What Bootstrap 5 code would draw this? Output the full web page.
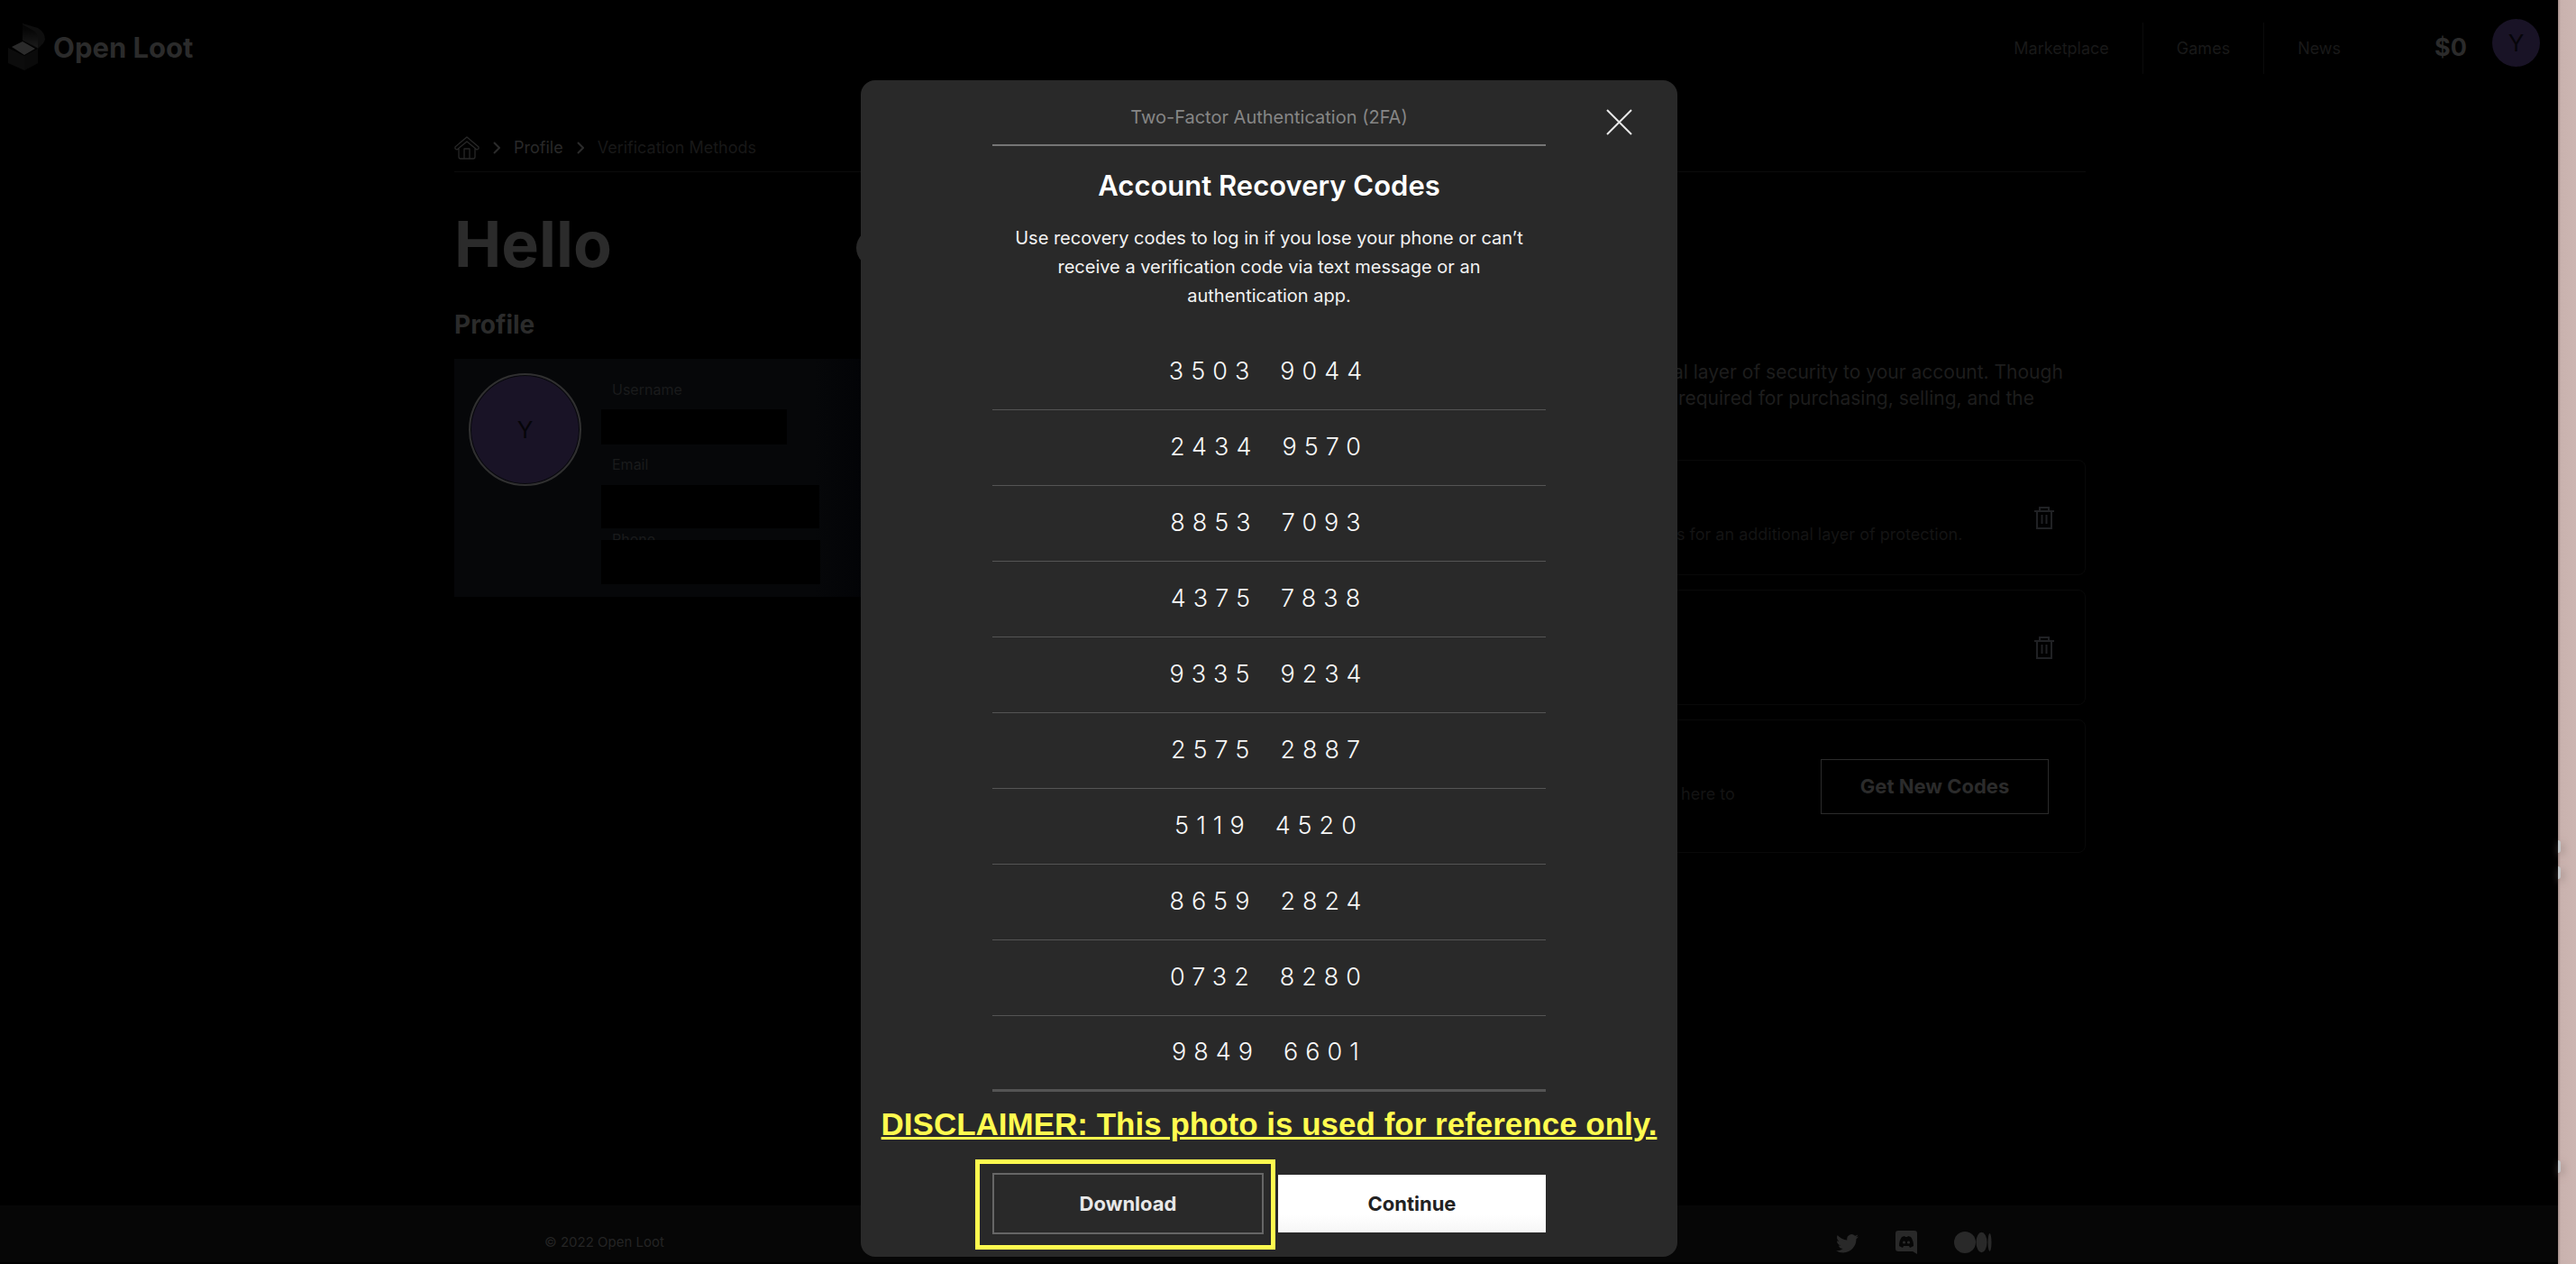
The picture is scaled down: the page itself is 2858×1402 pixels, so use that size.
<!DOCTYPE html>
<html lang="en">
<head>
<meta charset="utf-8">
<meta name="viewport" content="width=device-width, initial-scale=1">
<title>Open Loot - Verification Methods</title>
<link href="https://cdn.jsdelivr.net/npm/bootstrap@5.3.0/dist/css/bootstrap.min.css" rel="stylesheet">
<style>
  body { background: #000; color: #292929; font-family: Inter, "Noto Sans", sans-serif; font-size: 18px; overflow: hidden; }
  a { color: inherit; text-decoration: none; }
  .app-shell { min-height: 100vh; }
  .app-page { min-width: 0; }
  .page-gutter { padding-right: 20px; }
  .desk-strip { width: 20px; background: linear-gradient(90deg, #a38d89, #c9b2ae 3px, #cdb6b2); position: relative; flex: none; }
  .desk-bit { position: absolute; left: 0; width: 3px; height: 14px; border-radius: 0 3px 3px 0; background: #c4c6c8; box-shadow: 2px 3px 8px #8a7673; }
  .bit-a { top: 932px; } .bit-b { top: 961px; } .bit-c { top: 1287px; }

  .site-bar { height: 106px; padding-left: 9px; }
  .brand-name { font-size: 31px; font-weight: 700; line-height: 36px; color: #2b2b2b; }
  .top-links { margin-right: 67px; }
  .top-links a { font-size: 18px; color: #191919; padding: 15px 37px; line-height: 27px; border-right: 1px solid #0b0b0b; }
  .top-links a:last-child { border-right: 0; }
  .balance { font-size: 27px; font-weight: 700; color: #2b2b2b; margin-right: 28px; }
  .avatar-sm, .avatar-lg { border-radius: 50%; background: #191326; color: #060509; font-size: 26px; display: flex; align-items: center; justify-content: center; flex: none; }
  .avatar-sm { width: 53px; height: 53px; margin-bottom: 12px; }
  .avatar-lg { width: 125px; height: 125px; border: 2px solid #303030; box-shadow: inset 0 0 0 1px #08090b; }

  .page-body { max-width: 1810px; margin: 0 auto; min-height: 1231px; }
  .crumbs { height: 85px; border-bottom: 1px solid #0b0b0b; padding-top: 31px; gap: 15px; font-size: 18px; }
  .crumbs .current { color: #181818; }
  .hello-row { margin-top: 40px; }
  .hello { font-size: 70px; font-weight: 700; line-height: 80px; color: #2b2b2b; margin: 0; }
  .round-btn { width: 42px; height: 42px; border: 0; border-radius: 50%; background: #292929; margin-top: 8px; }
  .section-title { font-size: 28px; font-weight: 700; line-height: 36px; margin: 31px 0 20px; color: #2b2b2b; }
  .left-col { width: 488px; flex: none; }
  .profile-box { background: linear-gradient(90deg, #060709 82%, #020306 94%); height: 264px; padding: 16px; }
  .profile-form { margin-left: 22px; }
  .profile-form label { display: block; font-size: 16px; line-height: 20px; padding-left: 12px; color: #1a1b1c; }
  .blank-input { display: block; background: #000; border: 0; color: #292929; padding: 0 12px; }
  .in-user { width: 206px; height: 39px; margin: 12px 0; }
  .in-mail { width: 242px; height: 48px; margin: 13px 0 2px; }
  .in-phone { width: 243px; height: 49px; margin-top: -9px; position: relative; }

  .right-col { padding-top: 207px; min-width: 0; }
  .intro { font-size: 21px; line-height: 29px; color: #1d1d1d; margin: 0 0 54px; padding-left: 864px; white-space: nowrap; }
  .method { border: 1px solid #090909; border-radius: 8px; height: 128px; margin-bottom: 16px; padding: 0 34px 0 867px; color: #141414; font-size: 18px; }
  .method.tall { height: 148px; padding-right: 40px; }
  .method p { margin: 70px 0 0; line-height: 24px; white-space: nowrap; }
  .icon-btn { background: none; border: 0; padding: 0; color: #202124; line-height: 0; }
  .btn-dim, .btn-dim:hover { border: 1px solid #2b2b2b; border-radius: 0; color: #2b2b2b; font-size: 22px; font-weight: 700; width: 253px; height: 61px; padding: 0; }

  .site-foot { height: 63px; background: #060606; padding-top: 28px; color: #242424; font-size: 15px; }
  .foot-inner { max-width: 1610px; margin: 0 auto; padding-right: 4px; }
  .foot-icons { gap: 41px; color: #292929; line-height: 0; }

  .modal.code-modal { right: 42px; width: auto; overflow: hidden; }
  .code-modal .modal-dialog { max-width: 906px; margin: 89px auto 0; }
  .code-modal .modal-content { background: #292929; border: 0; border-radius: 16px; color: #fff; padding: 26px 146px 25px; text-align: center; }
  .modal-kicker { font-size: 20px; line-height: 30px; padding-bottom: 15px; border-bottom: 2px solid #757575; color: #868686; margin: 0; font-weight: 400; }
  .modal-heading { font-size: 31px; font-weight: 600; line-height: 40px; margin: 24px 0 22px; }
  .modal-copy { font-size: 20px; line-height: 32px; margin: 0 0 27px; padding: 0 8px; color: #f2f2f2; }
  .code-list { margin: 0; padding: 0; list-style: none; }
  .code-list li { height: 84px; border-bottom: 1px solid #545454; display: flex; justify-content: center; align-items: center; gap: 26px; font-size: 27px; font-weight: 300; letter-spacing: 8px; color: #f8f8f8; }
  .code-list li:last-child { border-bottom: 3px solid #545454; }
  .close-x { position: absolute; right: 50px; top: 32px; background: none; border: 0; padding: 0; line-height: 0; }
  .notice { font-family: "Liberation Sans", Arial, sans-serif; font-size: 35px; font-weight: 700; line-height: 40px; color: #fffb4f; text-decoration: underline; text-decoration-thickness: 3px; white-space: nowrap; margin: 16px -140px 34px; }
  .modal-actions { gap: 16px; }
  .modal-actions .btn { border-radius: 0; font-size: 22px; font-weight: 700; height: 64px; flex: 1; }
  .modal-actions .btn-download { color: #e8e8e8; border: 2px solid #666; height: 68px; position: relative; }
  .btn-download::after { content: ""; position: absolute; top: -17px; right: -15px; bottom: -19px; left: -21px; border: 5px solid #fffb4f; }
  .modal-actions .btn-next { background: linear-gradient(#fff 70%, #f6f6f6); color: #222; border: 0; }
</style>
<script src="https://cdn.jsdelivr.net/npm/bootstrap@5.3.0/dist/js/bootstrap.bundle.min.js"></script>
</head>
<body>
<div class="app-shell d-flex">
  <div class="app-page flex-grow-1">
    <header class="site-bar page-gutter d-flex align-items-center justify-content-between">
      <a href="#" class="d-flex align-items-center gap-2">
        <svg width="42" height="54" viewBox="0 0 42 54" aria-hidden="true">
          <defs><linearGradient id="lid" x1="0" y1="0" x2="0" y2="1"><stop offset=".2" stop-color="#050505"/><stop offset="1" stop-color="#1b1b1b"/></linearGradient></defs>
          <path d="M16 0 33 5q8 5 8 13l-2 4-6 6-17-9z" fill="#0e0e0e"/>
          <path d="M16 1 30 9q3 3 3 8v10L16 18z" fill="url(#lid)"/>
          <path d="M0 27 18 36 33 28v16l-15 8L0 44z" fill="#0c0c0c"/>
          <path d="M18 36 33 28v16l-15 8z" fill="#0a0a0a"/>
          <path d="M4 26 16 20 30 28 18 35z" fill="#2b2b2b"/>
        </svg>
        <span class="brand-name">Open Loot</span>
      </a>
      <div class="d-flex align-items-center">
        <nav class="top-links d-flex"><a href="#">Marketplace</a><a href="#">Games</a><a href="#">News</a></nav>
        <span class="balance">$0</span>
        <span class="avatar-sm">Y</span>
      </div>
    </header>

    <div class="page-gutter">
    <main class="page-body">
      <nav class="crumbs d-flex align-items-center" aria-label="Breadcrumb">
        <a href="#" aria-label="Home" class="d-flex"><svg width="28" height="26" viewBox="0 0 28 26" fill="none" stroke="#272727" stroke-width="1.300" stroke-linejoin="round"><path d="M1 12 14 1l13 11v2l-2 1L14 6 3 15l-2-1zM5 14v9q0 2 2 2h14q2 0 2-2v-9M11 25V14h6v11"/></svg></a>
        <svg width="8" height="14" viewBox="0 0 8 14" fill="none" stroke="#2b2b2b" stroke-width="2"><path d="M1 1 7 7 1 13"/></svg>
        <a href="#">Profile</a>
        <svg width="8" height="14" viewBox="0 0 8 14" fill="none" stroke="#2b2b2b" stroke-width="2"><path d="M1 1 7 7 1 13"/></svg>
        <span class="current">Verification Methods</span>
      </nav>
      <div class="d-flex">
        <section class="left-col">
          <div class="hello-row d-flex align-items-center justify-content-between">
            <h1 class="hello">Hello</h1>
            <button type="button" class="round-btn" aria-label="Edit"></button>
          </div>
          <h2 class="section-title">Profile</h2>
          <div class="profile-box d-flex">
            <span class="avatar-lg">Y</span>
            <form class="profile-form pt-2">
              <label for="u">Username</label><input id="u" class="blank-input in-user">
              <label for="e">Email</label><input id="e" class="blank-input in-mail">
              <label for="p">Phone</label><input id="p" class="blank-input in-phone">
            </form>
          </div>
        </section>
        <section class="right-col flex-grow-1">
          <p class="intro">al layer of security to your account. Though<br>&nbsp;required for purchasing, selling, and the</p>
          <div class="method d-flex justify-content-between align-items-center">
            <p class="align-self-start">s for an additional layer of protection.</p>
            <button type="button" class="icon-btn" aria-label="Delete"><svg width="22" height="25" viewBox="0 0 22 25" fill="none" stroke="currentColor" stroke-width="2"><path d="M0 5h22M6 5V1h10v4M3 5v19h16V5M8.500 9v10M13.500 9v10"/></svg></button>
          </div>
          <div class="method d-flex justify-content-end align-items-center">
            <button type="button" class="icon-btn" aria-label="Delete"><svg width="22" height="25" viewBox="0 0 22 25" fill="none" stroke="currentColor" stroke-width="2"><path d="M0 5h22M6 5V1h10v4M3 5v19h16V5M8.500 9v10M13.500 9v10"/></svg></button>
          </div>
          <div class="method tall d-flex justify-content-between align-items-center">
            <p class="align-self-start">&nbsp;here to</p>
            <button type="button" class="btn btn-dim">Get New Codes</button>
          </div>
        </section>
      </div>
    </main>
    </div>

    <footer class="site-foot page-gutter">
      <div class="foot-inner d-flex justify-content-between align-items-center">
        <span>© 2022 Open Loot</span>
        <div class="foot-icons d-flex align-items-center">
          <a href="#" aria-label="Twitter"><svg width="25" height="25" viewBox="0 0 16 16" fill="currentColor"><path d="M5.026 15c6.038 0 9.341-5.003 9.341-9.334 0-.14 0-.282-.006-.422A6.685 6.685 0 0 0 16 3.542a6.658 6.658 0 0 1-1.889.518 3.301 3.301 0 0 0 1.447-1.817 6.533 6.533 0 0 1-2.087.793A3.286 3.286 0 0 0 7.875 6.03a9.325 9.325 0 0 1-6.767-3.429 3.289 3.289 0 0 0 1.018 4.382A3.323 3.323 0 0 1 .64 6.575v.045a3.288 3.288 0 0 0 2.632 3.218 3.203 3.203 0 0 1-.865.115 3.23 3.23 0 0 1-.614-.057 3.283 3.283 0 0 0 3.067 2.277A6.588 6.588 0 0 1 .78 13.58a6.32 6.32 0 0 1-.78-.045A9.344 9.344 0 0 0 5.026 15z"/></svg></a>
          <a href="#" aria-label="Discord"><svg width="24" height="26" viewBox="0 0 24 26"><path d="M3 0h18q3 0 3 3v23l-5-3H3q-3 0-3-3V3q0-3 3-3z" fill="currentColor"/><path d="M4 17q0-6 3-10l3-1 1 1h2l1-1 3 1q3 4 3 10l-4 2-1-2H9l-1 2z" fill="#060606"/><circle cx="9.500" cy="13" r="1.600" fill="currentColor"/><circle cx="14.500" cy="13" r="1.600" fill="currentColor"/></svg></a>
          <a href="#" aria-label="Medium"><svg width="42" height="24" viewBox="0 0 42 24" fill="currentColor"><circle cx="12" cy="12" r="12"/><ellipse cx="30.500" cy="12" rx="6" ry="11.300"/><ellipse cx="39.500" cy="12" rx="2" ry="10"/></svg></a>
        </div>
      </div>
    </footer>
  </div>
  <div class="desk-strip"><span class="desk-bit bit-a"></span><span class="desk-bit bit-b"></span><span class="desk-bit bit-c"></span></div>
</div>

<div class="modal code-modal d-block" tabindex="-1" role="dialog" aria-labelledby="mt">
  <div class="modal-dialog"><div class="modal-content">
    <button type="button" class="close-x" aria-label="Close"><svg width="29" height="29" viewBox="0 0 29 29" stroke="#e8e8e8" stroke-width="2"><path d="M1 1 28 28M28 1 1 28"/></svg></button>
    <p class="modal-kicker">Two-Factor Authentication (2FA)</p>
    <h2 class="modal-heading" id="mt">Account Recovery Codes</h2>
    <p class="modal-copy">Use recovery codes to log in if you lose your phone or can’t receive a verification code via text message or an authentication app.</p>
    <ul class="code-list">
      <li><span>3503</span><span>9044</span></li>
      <li><span>2434</span><span>9570</span></li>
      <li><span>8853</span><span>7093</span></li>
      <li><span>4375</span><span>7838</span></li>
      <li><span>9335</span><span>9234</span></li>
      <li><span>2575</span><span>2887</span></li>
      <li><span>5119</span><span>4520</span></li>
      <li><span>8659</span><span>2824</span></li>
      <li><span>0732</span><span>8280</span></li>
      <li><span>9849</span><span>6601</span></li>
    </ul>
    <p class="notice">DISCLAIMER: This photo is used for reference only.</p>
    <div class="modal-actions d-flex align-items-center"><button type="button" class="btn btn-download">Download</button><button type="button" class="btn btn-next">Continue</button></div>
  </div></div>
</div>
</body>
</html>
